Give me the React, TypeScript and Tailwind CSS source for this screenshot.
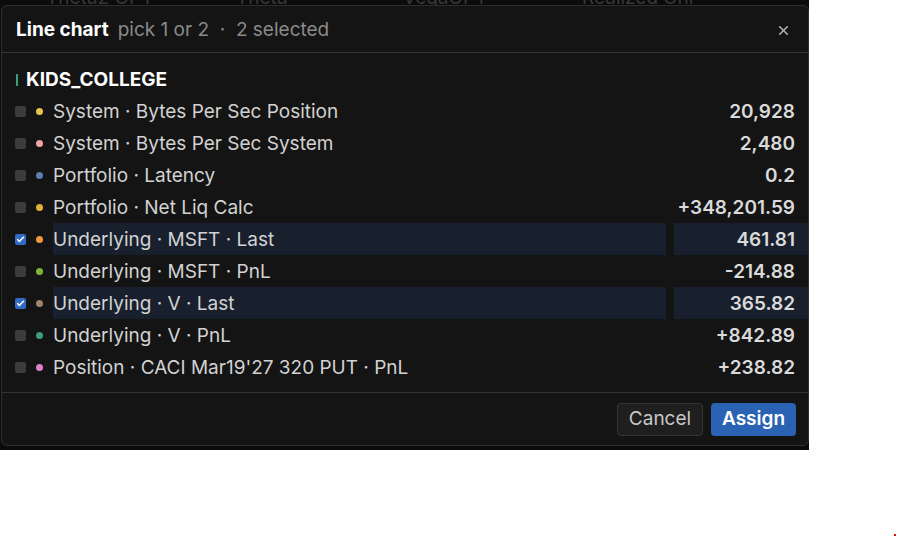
import { Check, X } from 'lucide-react';

type Series = { label: string; value: string; color: string; checked?: boolean };

const series: Series[] = [
  { label: 'System · Bytes Per Sec Position', value: '20,928', color: '#e6c64a' },
  { label: 'System · Bytes Per Sec System', value: '2,480', color: '#f0a3a8' },
  { label: 'Portfolio · Latency', value: '0.2', color: '#5b7db3' },
  { label: 'Portfolio · Net Liq Calc', value: '+348,201.59', color: '#e2b234' },
  { label: 'Underlying · MSFT · Last', value: '461.81', color: '#f0983e', checked: true },
  { label: 'Underlying · MSFT · PnL', value: '-214.88', color: '#7fb434' },
  { label: 'Underlying · V · Last', value: '365.82', color: '#a3826a', checked: true },
  { label: 'Underlying · V · PnL', value: '+842.89', color: '#3d9e7c' },
  { label: "Position · CACI Mar19'27 320 PUT · PnL", value: '+238.82', color: '#e07fca' },
];

function Row({ s }: { s: Series }) {
  const hl = s.checked ? 'bg-[#18202e]' : '';
  return (
    <div className="flex h-[32px] items-stretch pl-[13px]">
      <div className="flex w-[11px] items-center">
        {s.checked ? (
          <span className="flex h-[11px] w-[11px] items-center justify-center rounded-[2px] bg-[#2f6bc4]">
            <Check size={9} strokeWidth={4} color="#fff" />
          </span>
        ) : (
          <span className="h-[11px] w-[11px] rounded-[2px] bg-[#3c3c3c]" />
        )}
      </div>
      <div className="ml-[10px] flex w-[7px] items-center">
        <span className="h-[7px] w-[7px] rounded-full" style={{ background: s.color }} />
      </div>
      <div className={`ml-[10px] flex flex-1 items-center pt-[2px] text-[19px] text-[#d2d2d2] ${hl}`}>{s.label}</div>
      <div className={`ml-[8px] flex w-[134px] items-center justify-end pr-[13px] pt-[2px] text-[19px] font-semibold text-[#dadada] ${hl}`}>
        {s.value}
      </div>
    </div>
  );
}

export default function App() {
  return (
    <div className="relative h-[537px] w-[899px] bg-white" style={{ fontFamily: 'Inter, "Noto Sans", sans-serif' }}>
      <div className="relative h-[450px] w-[809px] overflow-hidden bg-[#0b0b0b]">
        {/* table header behind the modal */}
        <div className="-mt-[13px] flex h-[22px] items-center pl-[46px] text-[19px] text-[#383838]">
          <span className="w-[190px]">Theta2 OPT</span>
          <span className="w-[167px]">Theta</span>
          <span className="w-[179px]">VegaOPT</span>
          <span>Realized Unl</span>
        </div>

        <div className="absolute left-[1px] top-[5px] flex h-[441px] w-[808px] flex-col rounded-md border border-[#2e2e2e] bg-[#141414]">
          <div className="flex h-[47px] items-center border-b border-[#333] pl-[14px] pr-[17px] pt-[2px]">
            <span className="text-[19px] font-bold text-white">Line chart</span>
            <span className="ml-[9px] text-[19px] text-[#8a8a8a]">pick 1 or 2 &nbsp;·&nbsp; 2 selected</span>
            <X className="ml-auto" size={15} strokeWidth={2.6} color="#b0b0b0" />
          </div>

          <div className="mb-[6px] mt-[16px] flex h-[20px] items-center pl-[14px] pt-[2px]">
            <span className="h-[12px] w-[2px] bg-[#3d9e7c]" />
            <span className="ml-[8px] text-[19px] font-bold text-white">KIDS_COLLEGE</span>
          </div>

          <div className="flex flex-col">
            {series.map((s) => (
              <Row key={s.label} s={s} />
            ))}
          </div>

          <div className="mt-[9px] flex flex-1 items-center justify-end gap-[8px] border-t border-[#333] pr-[12px]">
            <button className="h-[33px] w-[86px] rounded-[4px] border border-[#333] bg-[#1f1f1f] pt-[1px] text-[19px] text-[#c8c8c8]">
              Cancel
            </button>
            <button className="h-[33px] w-[85px] rounded-[4px] bg-[#2a63b3] pt-[1px] text-[19px] font-semibold text-white">
              Assign
            </button>
          </div>
        </div>
      </div>
      <span className="absolute left-[894px] top-[534px] h-[2px] w-[2px] bg-[#e01010]" />
    </div>
  );
}
